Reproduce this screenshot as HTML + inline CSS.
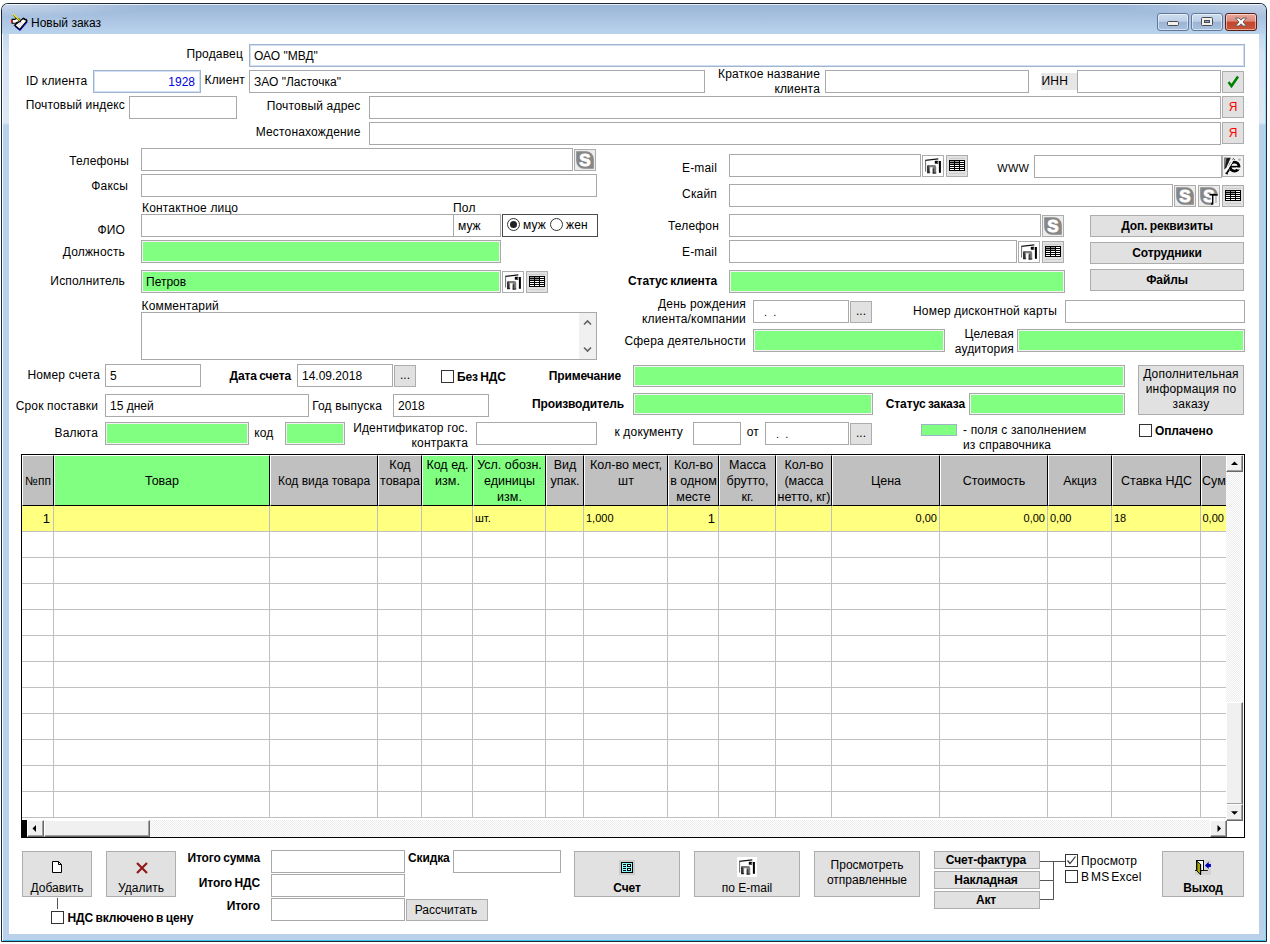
<!DOCTYPE html>
<html lang="ru"><head><meta charset="utf-8"><title>Новый заказ</title>
<style>
html,body{margin:0;padding:0;background:#fff;}
body{width:1270px;height:944px;position:relative;overflow:hidden;font-family:"Liberation Sans",sans-serif;font-size:12px;color:#000;}
div{box-sizing:border-box;}
#win{position:absolute;left:1px;top:3px;width:1266px;height:939px;border-radius:7px 7px 1px 1px;background:#1c2833;}
#frame{position:absolute;left:1px;top:1px;right:1px;bottom:1px;border-radius:6px 6px 0 0;
 background:linear-gradient(to bottom,#cfdff0 0px,#a6bfdf 9px,#b4cbe7 22px,#c3d8ee 31px,#d6e3f3 50px,#dde8f5 119px,#b9d1ea 121px,#b9d1ea 100%);
 box-shadow:inset 1px 0 0 rgba(255,255,255,.9),inset -1px 0 0 rgba(120,215,245,.7),inset 0 -1px 0 #3cc6ef;}
#tbar{position:absolute;left:1px;top:1px;right:1px;height:30px;border-radius:6px 6px 0 0;
 background:radial-gradient(ellipse 150px 13px at 0 0,rgba(255,255,255,.5),rgba(255,255,255,0)),radial-gradient(ellipse 150px 13px at 100% 0,rgba(255,255,255,.45),rgba(255,255,255,0)),linear-gradient(to bottom,#e6eef8 0px,#e6eef8 1px,#9ab5d7 1px,#a3bddd 9px,#b9d2ec 29px,#bbd3ed 30px);}
#client{position:absolute;left:9px;top:34px;width:1250px;height:900px;background:#fff;}
#title{position:absolute;left:31px;top:15px;font-size:12px;line-height:16px;white-space:nowrap;color:#000;}
.l{position:absolute;white-space:nowrap;letter-spacing:0.17px;}
.b{font-weight:bold;letter-spacing:-0.12px;word-spacing:-0.8px;}
.i{position:absolute;background:#fff;border:1px solid #a9a9a9;font-size:12px;line-height:20px;padding:0.6px 0 0 4px;white-space:nowrap;overflow:hidden;}
.g{background:#80ff80;box-shadow:inset 0 0 0 1px #f3f3f3;}
.hot{border-color:#a3b3cb;box-shadow:inset 0 0 0 1px #cfe0f4;}
.bt{position:absolute;background:#e1e1e1;border:1px solid #adadad;text-align:center;font-size:12px;line-height:14px;white-space:nowrap;overflow:hidden;}
.bt svg{position:absolute;}
.cb{position:absolute;width:13px;height:13px;background:#fff;border:1px solid #333;}
.gh{position:absolute;background:#c0c0c0;border-right:1px solid #000;border-bottom:1px solid #000;border-left:1px solid #fff;border-top:1px solid #fff;font-size:12.5px;line-height:16px;text-align:center;display:flex;align-items:center;justify-content:center;top:455px;height:51px;overflow:hidden;white-space:nowrap;}
.gh.gr{background:#80ff80;}
.gc{position:absolute;font-size:11px;line-height:14px;white-space:nowrap;}
.ib{background:#ececec;}
.ibw{background:#fff;}

</style></head>
<body>
<div id="win"><div id="frame"></div><div id="tbar"></div></div>
<div id="client"></div>
<svg style="position:absolute;left:10px;top:13px" width="18" height="18" viewBox="10 13 18 18">
<path d="M15.1 26.2 L20 30.2 L27.3 21.6" fill="none" stroke="#0000f0" stroke-width="1.2"/>
<path d="M14.6 25.2 L23.4 18.3 L26.9 20.8 L19.8 29.4 Z" fill="#fff" stroke="#000" stroke-width="1.3" stroke-linejoin="miter"/>
<path d="M17.5 25.5 L21.5 22.4 M19 27 L22.8 23.6" stroke="#c8c8c8" stroke-width=".8"/>
<path d="M23.2 18.2 L25.2 19.8 M25.6 19 L26.6 20" stroke="#000" stroke-width="1.4"/>
<path d="M12.1 19.4 L14.8 19.4 L16.6 18.2 L19.4 19.2 L20.3 21.6 L17 22.2 L15.6 23.2 L12.1 23.2 Z" fill="#fff" stroke="#000" stroke-width="1.1"/>
<rect x="11" y="19.9" width="1.3" height="3.1" fill="#f00"/>
<path d="M13.3 14.9 L19.7 21.1" stroke="#000" stroke-width="1.3"/>
<path d="M13.1 14.2 L19.9 20.6" stroke="#f4f400" stroke-width="1.3"/>
</svg>
<div id="title">Новый заказ</div>
<div style="position:absolute;left:1157px;top:13px;width:32px;height:18px;border:1px solid #62799a;border-radius:3px;background:linear-gradient(to bottom,#cfdef0 0%,#bccfe7 46%,#9bb4d4 50%,#a9c1df 100%);box-shadow:inset 0 0 0 1px rgba(255,255,255,.5);"><div style="position:absolute;left:9px;top:7px;width:12px;height:5px;background:#f4f1ea;border:1px solid #4a4a55;border-radius:1.5px"></div></div>
<div style="position:absolute;left:1191px;top:13px;width:32px;height:18px;border:1px solid #62799a;border-radius:3px;background:linear-gradient(to bottom,#cfdef0 0%,#bccfe7 46%,#9bb4d4 50%,#a9c1df 100%);box-shadow:inset 0 0 0 1px rgba(255,255,255,.5);"><div style="position:absolute;left:9px;top:3px;width:12px;height:9px;background:#f4f1ea;border:1px solid #4a4a55;border-radius:1.5px"><div style="position:absolute;left:2px;top:2px;width:6px;height:3px;background:#8aa5c8;border:1px solid #4a4a55"></div></div></div>
<div style="position:absolute;left:1225px;top:13px;width:32px;height:18px;border:1px solid #5d1e14;border-radius:3px;background:linear-gradient(to bottom,#e9a99b 0%,#d98a7b 45%,#c4452c 50%,#c9553a 100%);box-shadow:inset 0 0 0 1px rgba(255,255,255,.5);"><svg width="30" height="16" viewBox="0 0 30 16" style="position:absolute;left:0;top:0"><path d="M9.5 4 L13 4 L15 6.2 L17 4 L20.5 4 L17 8 L20.5 12 L17 12 L15 9.8 L13 12 L9.5 12 L13 8 Z" fill="#fff" stroke="#555" stroke-width=".9"/></svg></div>
<div class="l" style="top:47.0px;line-height:14px;font-size:12px;right:1027.0px;text-align:right;">Продавец</div>
<div class="i hot" style="left:249px;top:44px;width:996px;height:23px;">ОАО "МВД"</div>
<div class="l" style="top:74.0px;line-height:14px;font-size:12px;left:26.0px;">ID клиента</div>
<div class="i hot" style="left:93px;top:70px;width:108px;height:23px;text-align:right;padding-right:5px;color:#0000e0;">1928</div>
<div class="l" style="top:73.0px;line-height:14px;font-size:12px;right:1025.0px;text-align:right;">Клиент</div>
<div class="i " style="left:249px;top:70px;width:456px;height:23px;">ЗАО "Ласточка"</div>
<div class="l" style="top:67.0px;line-height:14px;font-size:12px;right:450.0px;text-align:right;">Краткое название</div>
<div class="l" style="top:82.0px;line-height:14px;font-size:12px;right:450.0px;text-align:right;">клиента</div>
<div class="i " style="left:825px;top:70px;width:204px;height:23px;"></div>
<div style="position:absolute;left:1041px;top:73px;width:36px;height:17px;background:#e6e6e6;"></div>
<div class="l" style="top:74.0px;line-height:14px;font-size:12px;left:1041.5px;">ИНН</div>
<div class="i " style="left:1077px;top:70px;width:144px;height:23px;"></div>
<div class="bt " style="left:1222px;top:71px;width:22px;height:22px;"><svg width="20" height="20" viewBox="0 0 20 20" style="left:0;top:0"><path d="M5.5 10 L8.5 14 L15 4.5" fill="none" stroke="#008000" stroke-width="2.5"/></svg></div>
<div class="l" style="top:98.0px;line-height:14px;font-size:12px;right:1145.0px;text-align:right;">Почтовый индекс</div>
<div class="i " style="left:129px;top:96px;width:108px;height:23px;"></div>
<div class="l" style="top:99.0px;line-height:14px;font-size:12px;right:909.5px;text-align:right;">Почтовый адрес</div>
<div class="i " style="left:369px;top:96px;width:852px;height:23px;"></div>
<div class="bt " style="left:1222px;top:96px;width:22px;height:22px;"><span style="color:#f00;line-height:20px">Я</span></div>
<div class="l" style="top:125.0px;line-height:14px;font-size:12px;right:909.5px;text-align:right;">Местонахождение</div>
<div class="i " style="left:369px;top:122px;width:852px;height:23px;"></div>
<div class="bt " style="left:1222px;top:122px;width:22px;height:22px;"><span style="color:#f00;line-height:20px">Я</span></div>
<div class="l" style="top:153.5px;line-height:14px;font-size:12px;right:1141.0px;text-align:right;">Телефоны</div>
<div class="i " style="left:141px;top:148px;width:432px;height:23px;"></div>
<div class="bt ib" style="left:574px;top:149px;width:22px;height:22px;"><svg width="20" height="20" viewBox="0 0 20 20" style="left:0;top:0"><path d="M1.2 1.2 L11 1.2 A7.8 7.8 0 0 1 18.8 9 L18.8 18.8 L9 18.8 A7.8 7.8 0 0 1 1.2 11 Z" fill="#878787"/><text x="10" y="16.2" text-anchor="middle" font-family="Liberation Sans, sans-serif" font-weight="bold" font-size="17" fill="#fff" stroke="#fff" stroke-width=".9">S</text></svg></div>
<div class="l" style="top:179.0px;line-height:14px;font-size:12px;right:1142.0px;text-align:right;">Факсы</div>
<div class="i " style="left:141px;top:174px;width:456px;height:23px;"></div>
<div class="l" style="top:201.0px;line-height:14px;font-size:12px;left:142.0px;">Контактное лицо</div>
<div class="l" style="top:201.0px;line-height:14px;font-size:12px;left:453.0px;">Пол</div>
<div class="l" style="top:222.5px;line-height:14px;font-size:12px;right:1145.0px;text-align:right;">ФИО</div>
<div class="i " style="left:141px;top:214px;width:313px;height:23px;"></div>
<div class="i " style="left:453px;top:214px;width:48px;height:23px;">муж</div>
<div style="position:absolute;left:502px;top:214px;width:96px;height:23px;border:1px solid #4a4a4a;background:#fff;"></div>
<div style="position:absolute;left:507.0px;top:218.0px;width:13px;height:13px;border-radius:50%;border:1px solid #333;background:#fff"><div style="position:absolute;left:2px;top:2px;width:7px;height:7px;border-radius:50%;background:#222"></div></div>
<div class="l" style="top:217.5px;line-height:14px;font-size:12px;left:523.0px;">муж</div>
<div style="position:absolute;left:550.0px;top:218.0px;width:13px;height:13px;border-radius:50%;border:1px solid #333;background:#fff"></div>
<div class="l" style="top:217.5px;line-height:14px;font-size:12px;left:566.0px;">жен</div>
<div class="l" style="top:245.0px;line-height:14px;font-size:12px;right:1145.0px;text-align:right;">Должность</div>
<div class="i g" style="left:141px;top:240px;width:360px;height:23px;"></div>
<div class="l" style="top:274.0px;line-height:14px;font-size:12px;right:1145.0px;text-align:right;">Исполнитель</div>
<div class="i g" style="left:141px;top:270px;width:360px;height:23px;">Петров</div>
<div class="bt ibw" style="left:502px;top:271px;width:22px;height:22px;"><svg width="20" height="20" viewBox="0 0 20 20" style="left:0px;top:0px"><rect x="0" y="0" width="20" height="20" fill="#fff"/><path d="M2.2 3.8 L15.3 2.2 L15.3 3.4 L2.2 5 Z" fill="#111"/><path d="M2.6 4.6 L2.6 15.6" stroke="#6a6a6a" stroke-width="1"/><rect x="11.8" y="4.8" width="3.5" height="2.9" fill="#000"/><rect x="14.3" y="5.7" width="1" height="1" fill="#c8c8c8"/><rect x="15.9" y="5" width="2" height="11.8" fill="#000"/><path d="M4.1 17 L4.1 10.6 Q4.1 9.1 5.8 9.1 L11.4 9.1 Q13.2 9.1 13.2 10.8 L13.2 17.6 L9.7 17.6 L9.7 11.3 L7.1 11.3 L7.1 17 Z" fill="#7c7c7c"/><path d="M4.1 17 L4.1 10.6 Q4.1 9.3 5.4 9.1 L6.3 17 Z" fill="#2c2c2c"/><path d="M9.7 17.6 L9.7 12.4 L11.3 12.4 L11.3 17.6 Z" fill="#3a3a3a"/><path d="M4.1 16.2 L7.1 16.2 L7.1 17.2 L4.1 17.2 Z M9.7 16.6 L13.2 16.6 L13.2 17.6 L9.7 17.6 Z" fill="#2a2a2a"/></svg></div>
<div class="bt " style="left:526px;top:271px;width:22px;height:22px;"><svg width="18" height="16" viewBox="0 0 18 16" shape-rendering="crispEdges" style="left:1px;top:2px"><rect x="1" y="0" width="16" height="1" fill="#cdcdcd"/><rect x="1" y="15" width="16" height="1" fill="#cdcdcd"/><rect x="1" y="2" width="16" height="11" fill="#000"/><rect x="2" y="3" width="4" height="1" fill="#9a9a9a"/><rect x="7" y="3" width="4" height="1" fill="#9a9a9a"/><rect x="12" y="3" width="4" height="1" fill="#fff"/><rect x="2" y="5" width="4" height="1" fill="#9a9a9a"/><rect x="7" y="5" width="4" height="1" fill="#9a9a9a"/><rect x="12" y="5" width="4" height="1" fill="#fff"/><rect x="2" y="7" width="4" height="1" fill="#fff"/><rect x="7" y="7" width="4" height="1" fill="#fff"/><rect x="12" y="7" width="4" height="1" fill="#fff"/><rect x="2" y="9" width="4" height="1" fill="#fff"/><rect x="7" y="9" width="4" height="1" fill="#fff"/><rect x="12" y="9" width="4" height="1" fill="#fff"/><rect x="2" y="11" width="4" height="1" fill="#fff"/><rect x="7" y="11" width="4" height="1" fill="#fff"/><rect x="12" y="11" width="4" height="1" fill="#fff"/></svg></div>
<div class="l" style="top:299.0px;line-height:14px;font-size:12px;left:141.5px;">Комментарий</div>
<div class="i " style="left:141px;top:312px;width:456px;height:48px;"></div>
<div style="position:absolute;left:579px;top:313px;width:17px;height:46px;background:#f0f0f0;"></div>
<svg style="position:absolute;left:579px;top:314px" width="17" height="44" viewBox="0 0 17 44"><path d="M5 10.5 L8.5 7 L12 10.5" fill="none" stroke="#606060" stroke-width="1.6"/><path d="M5 33.5 L8.5 37 L12 33.5" fill="none" stroke="#606060" stroke-width="1.6"/></svg>
<div class="l" style="top:161.0px;line-height:14px;font-size:12px;right:553.0px;text-align:right;">E-mail</div>
<div class="i " style="left:729px;top:154px;width:192px;height:23px;"></div>
<div class="bt ibw" style="left:922px;top:155px;width:22px;height:22px;"><svg width="20" height="20" viewBox="0 0 20 20" style="left:0px;top:0px"><rect x="0" y="0" width="20" height="20" fill="#fff"/><path d="M2.2 3.8 L15.3 2.2 L15.3 3.4 L2.2 5 Z" fill="#111"/><path d="M2.6 4.6 L2.6 15.6" stroke="#6a6a6a" stroke-width="1"/><rect x="11.8" y="4.8" width="3.5" height="2.9" fill="#000"/><rect x="14.3" y="5.7" width="1" height="1" fill="#c8c8c8"/><rect x="15.9" y="5" width="2" height="11.8" fill="#000"/><path d="M4.1 17 L4.1 10.6 Q4.1 9.1 5.8 9.1 L11.4 9.1 Q13.2 9.1 13.2 10.8 L13.2 17.6 L9.7 17.6 L9.7 11.3 L7.1 11.3 L7.1 17 Z" fill="#7c7c7c"/><path d="M4.1 17 L4.1 10.6 Q4.1 9.3 5.4 9.1 L6.3 17 Z" fill="#2c2c2c"/><path d="M9.7 17.6 L9.7 12.4 L11.3 12.4 L11.3 17.6 Z" fill="#3a3a3a"/><path d="M4.1 16.2 L7.1 16.2 L7.1 17.2 L4.1 17.2 Z M9.7 16.6 L13.2 16.6 L13.2 17.6 L9.7 17.6 Z" fill="#2a2a2a"/></svg></div>
<div class="bt " style="left:946px;top:155px;width:22px;height:22px;"><svg width="18" height="16" viewBox="0 0 18 16" shape-rendering="crispEdges" style="left:1px;top:2px"><rect x="1" y="0" width="16" height="1" fill="#cdcdcd"/><rect x="1" y="15" width="16" height="1" fill="#cdcdcd"/><rect x="1" y="2" width="16" height="11" fill="#000"/><rect x="2" y="3" width="4" height="1" fill="#9a9a9a"/><rect x="7" y="3" width="4" height="1" fill="#9a9a9a"/><rect x="12" y="3" width="4" height="1" fill="#fff"/><rect x="2" y="5" width="4" height="1" fill="#9a9a9a"/><rect x="7" y="5" width="4" height="1" fill="#9a9a9a"/><rect x="12" y="5" width="4" height="1" fill="#fff"/><rect x="2" y="7" width="4" height="1" fill="#fff"/><rect x="7" y="7" width="4" height="1" fill="#fff"/><rect x="12" y="7" width="4" height="1" fill="#fff"/><rect x="2" y="9" width="4" height="1" fill="#fff"/><rect x="7" y="9" width="4" height="1" fill="#fff"/><rect x="12" y="9" width="4" height="1" fill="#fff"/><rect x="2" y="11" width="4" height="1" fill="#fff"/><rect x="7" y="11" width="4" height="1" fill="#fff"/><rect x="12" y="11" width="4" height="1" fill="#fff"/></svg></div>
<div class="l" style="top:161.0px;line-height:14px;font-size:11px;right:241.0px;text-align:right;">WWW</div>
<div class="i " style="left:1034px;top:155px;width:188px;height:23px;"></div>
<div class="bt " style="left:1222px;top:155px;width:22px;height:22px;"><svg width="20" height="20" viewBox="0 0 20 20" style="left:0;top:0"><rect x="0" y="0" width="20" height="20" fill="#f1f1f1"/><path d="M1.2 1.8 L7.8 1.8 L3.4 11.5 L1.2 13.5 Z" fill="#1c1c1c"/><path d="M1.2 1.8 L3.6 1.8 L2 11 L1.2 13.5 Z" fill="#8a8a8a"/><circle cx="11.5" cy="10.6" r="4.5" fill="#fff" stroke="#000" stroke-width="2.9"/><rect x="7.4" y="9.8" width="9.6" height="1.7" fill="#000"/><path d="M12.6 11.5 L17.8 11.5 L17.8 13.4 L14.4 13.4 Z" fill="#f1f1f1"/><path d="M9.5 3.4 Q10.6 1.6 11.6 3.8" fill="none" stroke="#222" stroke-width="1"/><path d="M2.6 18 Q2 15.4 5.4 12.6 L6.8 14.4 Q4.4 16.6 5 18.4 Z" fill="#000"/><path d="M2.4 16.4 L9.4 5" stroke="#fff" stroke-width="1.5"/><path d="M15 3.2 L17.6 3.2 M15.6 4.2 L17.4 4.2" stroke="#9a9a9a" stroke-width=".9"/></svg></div>
<div class="l" style="top:187.0px;line-height:14px;font-size:12px;right:553.0px;text-align:right;">Скайп</div>
<div class="i " style="left:729px;top:184px;width:444px;height:23px;"></div>
<div class="bt ib" style="left:1174px;top:185px;width:22px;height:22px;"><svg width="20" height="20" viewBox="0 0 20 20" style="left:0;top:0"><path d="M1.2 1.2 L11 1.2 A7.8 7.8 0 0 1 18.8 9 L18.8 18.8 L9 18.8 A7.8 7.8 0 0 1 1.2 11 Z" fill="#878787"/><text x="10" y="16.2" text-anchor="middle" font-family="Liberation Sans, sans-serif" font-weight="bold" font-size="17" fill="#fff" stroke="#fff" stroke-width=".9">S</text></svg></div>
<div class="bt ib" style="left:1198px;top:185px;width:22px;height:22px;"><svg width="20" height="20" viewBox="0 0 20 20" style="left:0;top:0"><path d="M1.2 1.2 L11 1.2 A7.8 7.8 0 0 1 18.8 9 L18.8 18.8 L9 18.8 A7.8 7.8 0 0 1 1.2 11 Z" fill="#878787"/><text x="10" y="16.2" text-anchor="middle" font-family="Liberation Sans, sans-serif" font-weight="bold" font-size="17" fill="#fff" stroke="#fff" stroke-width=".9">S</text><rect x="13" y="10" width="7" height="10" fill="#f4f4f4"/><path d="M10.5 8.7 L18.5 8.7 M13.7 8.7 L13.7 18 M12 18 L14.2 18" stroke="#000" stroke-width="1.4" fill="none"/><path d="M17 10 L17 17" stroke="#999" stroke-width="1"/></svg></div>
<div class="bt " style="left:1222px;top:185px;width:22px;height:22px;"><svg width="18" height="16" viewBox="0 0 18 16" shape-rendering="crispEdges" style="left:1px;top:2px"><rect x="1" y="0" width="16" height="1" fill="#cdcdcd"/><rect x="1" y="15" width="16" height="1" fill="#cdcdcd"/><rect x="1" y="2" width="16" height="11" fill="#000"/><rect x="2" y="3" width="4" height="1" fill="#9a9a9a"/><rect x="7" y="3" width="4" height="1" fill="#9a9a9a"/><rect x="12" y="3" width="4" height="1" fill="#fff"/><rect x="2" y="5" width="4" height="1" fill="#9a9a9a"/><rect x="7" y="5" width="4" height="1" fill="#9a9a9a"/><rect x="12" y="5" width="4" height="1" fill="#fff"/><rect x="2" y="7" width="4" height="1" fill="#fff"/><rect x="7" y="7" width="4" height="1" fill="#fff"/><rect x="12" y="7" width="4" height="1" fill="#fff"/><rect x="2" y="9" width="4" height="1" fill="#fff"/><rect x="7" y="9" width="4" height="1" fill="#fff"/><rect x="12" y="9" width="4" height="1" fill="#fff"/><rect x="2" y="11" width="4" height="1" fill="#fff"/><rect x="7" y="11" width="4" height="1" fill="#fff"/><rect x="12" y="11" width="4" height="1" fill="#fff"/></svg></div>
<div class="l" style="top:219.0px;line-height:14px;font-size:12px;right:551.0px;text-align:right;">Телефон</div>
<div class="i " style="left:729px;top:214px;width:312px;height:23px;"></div>
<div class="bt ib" style="left:1042px;top:215px;width:22px;height:22px;"><svg width="20" height="20" viewBox="0 0 20 20" style="left:0;top:0"><path d="M1.2 1.2 L11 1.2 A7.8 7.8 0 0 1 18.8 9 L18.8 18.8 L9 18.8 A7.8 7.8 0 0 1 1.2 11 Z" fill="#878787"/><text x="10" y="16.2" text-anchor="middle" font-family="Liberation Sans, sans-serif" font-weight="bold" font-size="17" fill="#fff" stroke="#fff" stroke-width=".9">S</text></svg></div>
<div class="l" style="top:245.0px;line-height:14px;font-size:12px;right:553.0px;text-align:right;">E-mail</div>
<div class="i " style="left:729px;top:240px;width:288px;height:23px;"></div>
<div class="bt ibw" style="left:1018px;top:241px;width:22px;height:22px;"><svg width="20" height="20" viewBox="0 0 20 20" style="left:0px;top:0px"><rect x="0" y="0" width="20" height="20" fill="#fff"/><path d="M2.2 3.8 L15.3 2.2 L15.3 3.4 L2.2 5 Z" fill="#111"/><path d="M2.6 4.6 L2.6 15.6" stroke="#6a6a6a" stroke-width="1"/><rect x="11.8" y="4.8" width="3.5" height="2.9" fill="#000"/><rect x="14.3" y="5.7" width="1" height="1" fill="#c8c8c8"/><rect x="15.9" y="5" width="2" height="11.8" fill="#000"/><path d="M4.1 17 L4.1 10.6 Q4.1 9.1 5.8 9.1 L11.4 9.1 Q13.2 9.1 13.2 10.8 L13.2 17.6 L9.7 17.6 L9.7 11.3 L7.1 11.3 L7.1 17 Z" fill="#7c7c7c"/><path d="M4.1 17 L4.1 10.6 Q4.1 9.3 5.4 9.1 L6.3 17 Z" fill="#2c2c2c"/><path d="M9.7 17.6 L9.7 12.4 L11.3 12.4 L11.3 17.6 Z" fill="#3a3a3a"/><path d="M4.1 16.2 L7.1 16.2 L7.1 17.2 L4.1 17.2 Z M9.7 16.6 L13.2 16.6 L13.2 17.6 L9.7 17.6 Z" fill="#2a2a2a"/></svg></div>
<div class="bt " style="left:1042px;top:241px;width:22px;height:22px;"><svg width="18" height="16" viewBox="0 0 18 16" shape-rendering="crispEdges" style="left:1px;top:2px"><rect x="1" y="0" width="16" height="1" fill="#cdcdcd"/><rect x="1" y="15" width="16" height="1" fill="#cdcdcd"/><rect x="1" y="2" width="16" height="11" fill="#000"/><rect x="2" y="3" width="4" height="1" fill="#9a9a9a"/><rect x="7" y="3" width="4" height="1" fill="#9a9a9a"/><rect x="12" y="3" width="4" height="1" fill="#fff"/><rect x="2" y="5" width="4" height="1" fill="#9a9a9a"/><rect x="7" y="5" width="4" height="1" fill="#9a9a9a"/><rect x="12" y="5" width="4" height="1" fill="#fff"/><rect x="2" y="7" width="4" height="1" fill="#fff"/><rect x="7" y="7" width="4" height="1" fill="#fff"/><rect x="12" y="7" width="4" height="1" fill="#fff"/><rect x="2" y="9" width="4" height="1" fill="#fff"/><rect x="7" y="9" width="4" height="1" fill="#fff"/><rect x="12" y="9" width="4" height="1" fill="#fff"/><rect x="2" y="11" width="4" height="1" fill="#fff"/><rect x="7" y="11" width="4" height="1" fill="#fff"/><rect x="12" y="11" width="4" height="1" fill="#fff"/></svg></div>
<div class="l b" style="top:274.0px;line-height:14px;font-size:12px;right:553.0px;text-align:right;">Статус клиента</div>
<div class="i g" style="left:729px;top:270px;width:336px;height:23px;"></div>
<div class="l" style="top:297.0px;line-height:14px;font-size:12px;right:524.0px;text-align:right;">День рождения</div>
<div class="l" style="top:312.0px;line-height:14px;font-size:12px;right:524.0px;text-align:right;">клиента/компании</div>
<div class="i " style="left:753px;top:300px;width:96px;height:23px;font-size:11px;">&nbsp; .&nbsp; .</div>
<div class="bt " style="left:850px;top:301px;width:22px;height:22px;"><span style="line-height:18px">...</span></div>
<div class="l" style="top:304.0px;line-height:14px;font-size:12px;right:213.0px;text-align:right;">Номер дисконтной карты</div>
<div class="i " style="left:1065px;top:300px;width:180px;height:23px;"></div>
<div class="l" style="top:334.0px;line-height:14px;font-size:12px;right:524.0px;text-align:right;">Сфера деятельности</div>
<div class="i g" style="left:753px;top:329px;width:192px;height:23px;"></div>
<div class="l" style="top:327.0px;line-height:14px;font-size:12px;right:256.0px;text-align:right;">Целевая</div>
<div class="l" style="top:342.0px;line-height:14px;font-size:12px;right:256.0px;text-align:right;">аудитория</div>
<div class="i g" style="left:1017px;top:329px;width:228px;height:23px;"></div>
<div class="bt " style="left:1090px;top:215px;width:154px;height:22px;"><span class="b" style="line-height:21px">Доп. реквизиты</span></div>
<div class="bt " style="left:1090px;top:242px;width:154px;height:22px;"><span class="b" style="line-height:21px">Сотрудники</span></div>
<div class="bt " style="left:1090px;top:269px;width:154px;height:22px;"><span class="b" style="line-height:21px">Файлы</span></div>
<div class="l" style="top:368.0px;line-height:14px;font-size:12px;right:1170.0px;text-align:right;">Номер счета</div>
<div class="i " style="left:105px;top:364px;width:96px;height:23px;">5</div>
<div class="l b" style="top:369.0px;line-height:14px;font-size:12px;right:979.0px;text-align:right;">Дата счета</div>
<div class="i " style="left:297px;top:364px;width:96px;height:23px;">14.09.2018</div>
<div class="bt " style="left:394px;top:365px;width:22px;height:22px;"><span style="line-height:18px">...</span></div>
<div class="cb" style="left:441px;top:370px"></div>
<div class="l b" style="top:369.5px;line-height:14px;font-size:12px;left:457.0px;">Без НДС</div>
<div class="l b" style="top:369.0px;line-height:14px;font-size:12px;right:649.0px;text-align:right;">Примечание</div>
<div class="i g" style="left:633px;top:365px;width:492px;height:22px;"></div>
<div class="bt " style="left:1138px;top:365px;width:106px;height:50px;"><div style="line-height:15px;padding-top:1px;letter-spacing:0.2px">Дополнительная<br>информация по<br>заказу</div></div>
<div class="l" style="top:399.0px;line-height:14px;font-size:12px;right:1172.0px;text-align:right;">Срок поставки</div>
<div class="i " style="left:105px;top:394px;width:204px;height:23px;">15 дней</div>
<div class="l" style="top:399.0px;line-height:14px;font-size:12px;right:888.0px;text-align:right;">Год выпуска</div>
<div class="i " style="left:393px;top:394px;width:96px;height:23px;">2018</div>
<div class="l b" style="top:397.0px;line-height:14px;font-size:12px;right:646.0px;text-align:right;">Производитель</div>
<div class="i g" style="left:633px;top:393px;width:240px;height:22px;"></div>
<div class="l b" style="top:397.0px;line-height:14px;font-size:12px;right:305.0px;text-align:right;">Статус заказа</div>
<div class="i g" style="left:969px;top:393px;width:156px;height:22px;"></div>
<div class="l" style="top:425.5px;line-height:14px;font-size:12px;right:1172.0px;text-align:right;">Валюта</div>
<div class="i g" style="left:105px;top:422px;width:144px;height:23px;"></div>
<div class="l" style="top:425.5px;line-height:14px;font-size:12px;right:996.5px;text-align:right;">код</div>
<div class="i g" style="left:285px;top:422px;width:60px;height:23px;"></div>
<div class="l" style="top:421.0px;line-height:14px;font-size:12px;right:802.0px;text-align:right;">Идентификатор гос.</div>
<div class="l" style="top:435.5px;line-height:14px;font-size:12px;right:802.0px;text-align:right;">контракта</div>
<div class="i " style="left:476px;top:422px;width:121px;height:23px;"></div>
<div class="l" style="top:425.0px;line-height:14px;font-size:12px;right:587.0px;text-align:right;">к документу</div>
<div class="i " style="left:693px;top:422px;width:48px;height:23px;"></div>
<div class="l" style="top:425.0px;line-height:14px;font-size:12px;right:511.0px;text-align:right;">от</div>
<div class="i " style="left:765px;top:422px;width:84px;height:23px;font-size:11px;">&nbsp; .&nbsp; .</div>
<div class="bt " style="left:850px;top:423px;width:22px;height:22px;"><span style="line-height:18px">...</span></div>
<div style="position:absolute;left:921px;top:424px;width:36px;height:12px;background:#80ff80;border:1px solid #9fb3c8;"></div>
<div class="l" style="top:423.0px;line-height:14px;font-size:12px;left:963.0px;">- поля с заполнением</div>
<div class="l" style="top:438.0px;line-height:14px;font-size:12px;left:963.0px;">из справочника</div>
<div class="cb" style="left:1139px;top:424px"></div>
<div class="l b" style="top:424.0px;line-height:14px;font-size:12px;left:1155.0px;">Оплачено</div>
<div style="position:absolute;left:21px;top:454px;width:1224px;height:384px;background:#fff;border:1px solid #000;"></div>
<div class="gh" style="left:22px;width:32px;font-size:12px;"><div>№пп</div></div>
<div class="gh gr" style="left:54px;width:216px;"><div>Товар</div></div>
<div class="gh" style="left:270px;width:108px;font-size:12px;"><div>Код вида товара</div></div>
<div class="gh" style="left:378px;width:44px;align-items:flex-start;padding-top:0.8px;"><div>Код<br>товара</div></div>
<div class="gh gr" style="left:422px;width:51px;align-items:flex-start;padding-top:0.8px;"><div>Код ед.<br>изм.</div></div>
<div class="gh gr" style="left:473px;width:73px;align-items:flex-start;padding-top:0.8px;"><div>Усл. обозн.<br>единицы<br>изм.</div></div>
<div class="gh" style="left:546px;width:38px;align-items:flex-start;padding-top:0.8px;"><div>Вид<br>упак.</div></div>
<div class="gh" style="left:584px;width:84px;align-items:flex-start;padding-top:0.8px;"><div>Кол-во мест,<br>шт</div></div>
<div class="gh" style="left:668px;width:51px;align-items:flex-start;padding-top:0.8px;"><div>Кол-во<br>в одном<br>месте</div></div>
<div class="gh" style="left:719px;width:57px;align-items:flex-start;padding-top:0.8px;"><div>Масса<br>брутто,<br>кг.</div></div>
<div class="gh" style="left:776px;width:56px;align-items:flex-start;padding-top:0.8px;"><div>Кол-во<br>(масса<br>нетто, кг)</div></div>
<div class="gh" style="left:832px;width:108px;"><div>Цена</div></div>
<div class="gh" style="left:940px;width:108px;"><div>Стоимость</div></div>
<div class="gh" style="left:1048px;width:64px;"><div>Акциз</div></div>
<div class="gh" style="left:1112px;width:89px;"><div>Ставка НДС</div></div>
<div class="gh" style="left:1201px;width:25px;border-right:none;justify-content:flex-start;padding-left:0px;"><div>Сум</div></div>
<div style="position:absolute;left:22px;top:506px;width:1204px;height:25px;background:#ffff80;"></div>
<div style="position:absolute;left:53px;top:506px;width:1px;height:312px;background:#c0c0c0;"></div>
<div style="position:absolute;left:269px;top:506px;width:1px;height:312px;background:#c0c0c0;"></div>
<div style="position:absolute;left:377px;top:506px;width:1px;height:312px;background:#c0c0c0;"></div>
<div style="position:absolute;left:421px;top:506px;width:1px;height:312px;background:#c0c0c0;"></div>
<div style="position:absolute;left:472px;top:506px;width:1px;height:312px;background:#c0c0c0;"></div>
<div style="position:absolute;left:545px;top:506px;width:1px;height:312px;background:#c0c0c0;"></div>
<div style="position:absolute;left:583px;top:506px;width:1px;height:312px;background:#c0c0c0;"></div>
<div style="position:absolute;left:667px;top:506px;width:1px;height:312px;background:#c0c0c0;"></div>
<div style="position:absolute;left:718px;top:506px;width:1px;height:312px;background:#c0c0c0;"></div>
<div style="position:absolute;left:775px;top:506px;width:1px;height:312px;background:#c0c0c0;"></div>
<div style="position:absolute;left:831px;top:506px;width:1px;height:312px;background:#c0c0c0;"></div>
<div style="position:absolute;left:939px;top:506px;width:1px;height:312px;background:#c0c0c0;"></div>
<div style="position:absolute;left:1047px;top:506px;width:1px;height:312px;background:#c0c0c0;"></div>
<div style="position:absolute;left:1111px;top:506px;width:1px;height:312px;background:#c0c0c0;"></div>
<div style="position:absolute;left:1200px;top:506px;width:1px;height:312px;background:#c0c0c0;"></div>
<div style="position:absolute;left:22px;top:531px;width:1204px;height:1px;background:#c0c0c0;"></div>
<div style="position:absolute;left:22px;top:557px;width:1204px;height:1px;background:#c0c0c0;"></div>
<div style="position:absolute;left:22px;top:583px;width:1204px;height:1px;background:#c0c0c0;"></div>
<div style="position:absolute;left:22px;top:609px;width:1204px;height:1px;background:#c0c0c0;"></div>
<div style="position:absolute;left:22px;top:635px;width:1204px;height:1px;background:#c0c0c0;"></div>
<div style="position:absolute;left:22px;top:661px;width:1204px;height:1px;background:#c0c0c0;"></div>
<div style="position:absolute;left:22px;top:687px;width:1204px;height:1px;background:#c0c0c0;"></div>
<div style="position:absolute;left:22px;top:713px;width:1204px;height:1px;background:#c0c0c0;"></div>
<div style="position:absolute;left:22px;top:739px;width:1204px;height:1px;background:#c0c0c0;"></div>
<div style="position:absolute;left:22px;top:765px;width:1204px;height:1px;background:#c0c0c0;"></div>
<div style="position:absolute;left:22px;top:791px;width:1204px;height:1px;background:#c0c0c0;"></div>
<div style="position:absolute;left:22px;top:817px;width:1204px;height:1px;background:#c0c0c0;"></div>
<div class="gc" style="top:511.5px;font-size:13px;right:1220px;text-align:right;">1</div>
<div class="gc" style="top:510.79999999999995px;font-size:11px;left:475px;">шт.</div>
<div class="gc" style="top:510.79999999999995px;font-size:11px;left:586px;">1,000</div>
<div class="gc" style="top:511.5px;font-size:13px;right:555px;text-align:right;">1</div>
<div class="gc" style="top:510.79999999999995px;font-size:11px;right:333px;text-align:right;">0,00</div>
<div class="gc" style="top:510.79999999999995px;font-size:11px;right:225px;text-align:right;">0,00</div>
<div class="gc" style="top:510.79999999999995px;font-size:11px;left:1050px;">0,00</div>
<div class="gc" style="top:510.79999999999995px;font-size:11px;left:1114px;">18</div>
<div class="gc" style="top:510.79999999999995px;font-size:11px;left:1202.5px;">0,00</div>
<div style="position:absolute;left:1226px;top:455px;width:17px;height:365px;background:#f7f7f7 conic-gradient(#fff 25%,#ececec 0 50%,#fff 0 75%,#ececec 0) 0 0/2px 2px;"></div>
<div style="position:absolute;left:22px;top:820px;width:1205px;height:17px;background:#f7f7f7 conic-gradient(#fff 25%,#ececec 0 50%,#fff 0 75%,#ececec 0) 0 0/2px 2px;"></div>
<div style="position:absolute;left:1226px;top:455px;width:17px;height:17px;background:#f0f0f0;border-top:1px solid #fff;border-left:1px solid #fff;border-right:1px solid #696969;border-bottom:1px solid #696969;box-shadow:inset -1px -1px 0 #a0a0a0;"></div>
<svg style="position:absolute;left:0;top:0;pointer-events:none" width="1270" height="944"><polygon points="1231.0,465.0 1238.0,465.0 1234.5,461.5" fill="#000"/></svg>
<div style="position:absolute;left:1226px;top:702px;width:17px;height:103px;background:#f0f0f0;border-top:1px solid #fff;border-left:1px solid #fff;border-right:1px solid #696969;border-bottom:1px solid #696969;box-shadow:inset -1px -1px 0 #a0a0a0;"></div>
<div style="position:absolute;left:1226px;top:804px;width:17px;height:17px;background:#f0f0f0;border-top:1px solid #fff;border-left:1px solid #fff;border-right:1px solid #696969;border-bottom:1px solid #696969;box-shadow:inset -1px -1px 0 #a0a0a0;"></div>
<svg style="position:absolute;left:0;top:0;pointer-events:none" width="1270" height="944"><polygon points="1231.0,811.2 1238.0,811.2 1234.5,814.7" fill="#000"/></svg>
<div style="position:absolute;left:22px;top:820px;width:5px;height:17px;background:#000;"></div>
<div style="position:absolute;left:27px;top:820px;width:17px;height:17px;background:#f0f0f0;border-top:1px solid #fff;border-left:1px solid #fff;border-right:1px solid #696969;border-bottom:1px solid #696969;box-shadow:inset -1px -1px 0 #a0a0a0;"></div>
<svg style="position:absolute;left:0;top:0;pointer-events:none" width="1270" height="944"><polygon points="36.0,825.0 36.0,832.0 32.5,828.5" fill="#000"/></svg>
<div style="position:absolute;left:44px;top:820px;width:106px;height:17px;background:#f0f0f0;border-top:1px solid #fff;border-left:1px solid #fff;border-right:1px solid #696969;border-bottom:1px solid #696969;box-shadow:inset -1px -1px 0 #a0a0a0;"></div>
<div style="position:absolute;left:1210px;top:820px;width:17px;height:17px;background:#f0f0f0;border-top:1px solid #fff;border-left:1px solid #fff;border-right:1px solid #696969;border-bottom:1px solid #696969;box-shadow:inset -1px -1px 0 #a0a0a0;"></div>
<svg style="position:absolute;left:0;top:0;pointer-events:none" width="1270" height="944"><polygon points="1217.5,825.0 1217.5,832.0 1221.0,828.5" fill="#000"/></svg>
<div class="bt " style="left:22px;top:851px;width:70px;height:46px;"><svg width="12" height="14" viewBox="0 0 12 14" style="left:28px;top:8px"><path d="M1.5 1.5 L7.5 1.5 L10.5 4.5 L10.5 12.5 L1.5 12.5 Z" fill="#fff" stroke="#000" stroke-width="1"/><path d="M7.5 1.5 L7.5 4.5 L10.5 4.5" fill="none" stroke="#000" stroke-width="1"/></svg><div style="position:absolute;left:0;right:0;top:29px">Добавить</div></div>
<div class="bt " style="left:106px;top:851px;width:70px;height:46px;"><svg width="14" height="14" viewBox="0 0 14 14" style="left:28px;top:8.5px"><path d="M2 2 L12 12 M12 2 L2 12" stroke="#901818" stroke-width="2.2"/></svg><div style="position:absolute;left:0;right:0;top:29px">Удалить</div></div>
<div style="position:absolute;left:57px;top:898px;width:1px;height:11px;background:#555;"></div>
<div class="cb" style="left:51px;top:911px"></div>
<div class="l b" style="top:911.0px;line-height:14px;font-size:12px;left:67.5px;">НДС включено в цену</div>
<div class="l b" style="top:851.0px;line-height:14px;font-size:12px;right:1010.0px;text-align:right;">Итого сумма</div>
<div class="i " style="left:271px;top:850px;width:134px;height:23px;"></div>
<div class="l b" style="top:876.0px;line-height:14px;font-size:12px;right:1010.0px;text-align:right;">Итого НДС</div>
<div class="i " style="left:271px;top:874px;width:134px;height:23px;"></div>
<div class="l b" style="top:899.0px;line-height:14px;font-size:12px;right:1010.0px;text-align:right;">Итого</div>
<div class="i " style="left:271px;top:898px;width:134px;height:23px;"></div>
<div class="l b" style="top:851.0px;line-height:14px;font-size:12px;left:408.0px;">Скидка</div>
<div class="i " style="left:453px;top:850px;width:108px;height:23px;"></div>
<div class="bt " style="left:406px;top:899px;width:82px;height:22px;"><span style="line-height:21px;padding-right:2px">Рассчитать</span></div>
<div class="bt " style="left:574px;top:851px;width:106px;height:46px;"><svg width="16" height="15" viewBox="0 0 16 15" shape-rendering="crispEdges" style="left:44px;top:8px"><rect x="0" y="0" width="16" height="15" fill="#cbcbcb"/><rect x="2" y="2" width="12" height="11" fill="#000"/><rect x="3" y="3" width="10" height="9" fill="#8ff"/><rect x="4" y="4" width="3" height="1" fill="#000"/><rect x="4" y="6" width="3" height="1" fill="#000"/><rect x="4" y="8" width="3" height="1" fill="#000"/><rect x="4" y="10" width="3" height="1" fill="#000"/><rect x="8" y="4" width="4" height="3" fill="#000"/><rect x="9" y="5" width="2" height="1" fill="#fff"/><rect x="8" y="8" width="4" height="3" fill="#000"/><rect x="9" y="9" width="2" height="1" fill="#fff"/></svg><div class="b" style="position:absolute;left:0;right:0;top:29px">Счет</div></div>
<div class="bt " style="left:694px;top:851px;width:106px;height:46px;"><svg width="20" height="20" viewBox="0 0 20 20" style="left:42px;top:5px"><rect x="0" y="0" width="20" height="20" fill="#fff"/><path d="M2.2 3.8 L15.3 2.2 L15.3 3.4 L2.2 5 Z" fill="#111"/><path d="M2.6 4.6 L2.6 15.6" stroke="#6a6a6a" stroke-width="1"/><rect x="11.8" y="4.8" width="3.5" height="2.9" fill="#000"/><rect x="14.3" y="5.7" width="1" height="1" fill="#c8c8c8"/><rect x="15.9" y="5" width="2" height="11.8" fill="#000"/><path d="M4.1 17 L4.1 10.6 Q4.1 9.1 5.8 9.1 L11.4 9.1 Q13.2 9.1 13.2 10.8 L13.2 17.6 L9.7 17.6 L9.7 11.3 L7.1 11.3 L7.1 17 Z" fill="#7c7c7c"/><path d="M4.1 17 L4.1 10.6 Q4.1 9.3 5.4 9.1 L6.3 17 Z" fill="#2c2c2c"/><path d="M9.7 17.6 L9.7 12.4 L11.3 12.4 L11.3 17.6 Z" fill="#3a3a3a"/><path d="M4.1 16.2 L7.1 16.2 L7.1 17.2 L4.1 17.2 Z M9.7 16.6 L13.2 16.6 L13.2 17.6 L9.7 17.6 Z" fill="#2a2a2a"/></svg><div style="position:absolute;left:0;right:0;top:29px">по E-mail</div></div>
<div class="bt " style="left:814px;top:851px;width:106px;height:46px;"><div style="line-height:15px;padding-top:6px">Просмотреть<br>отправленные</div></div>
<div class="bt " style="left:934px;top:851px;width:106px;height:18px;"><span class="b" style="line-height:17px;padding-right:2px">Счет-фактура</span></div>
<div class="bt " style="left:934px;top:871px;width:106px;height:18px;"><span class="b" style="line-height:17px;padding-right:2px">Накладная</span></div>
<div class="bt " style="left:934px;top:891px;width:106px;height:18px;"><span class="b" style="line-height:17px;padding-right:2px">Акт</span></div>
<div style="position:absolute;left:1040px;top:861px;width:25px;height:1px;background:#555;"></div>
<div style="position:absolute;left:1040px;top:880px;width:13px;height:1px;background:#555;"></div>
<div style="position:absolute;left:1040px;top:899px;width:13px;height:1px;background:#555;"></div>
<div style="position:absolute;left:1053px;top:861px;width:1px;height:39px;background:#555;"></div>
<div class="cb" style="left:1065px;top:854px"><svg width="11" height="11" viewBox="0 0 11 11" style="position:absolute;left:0;top:0"><path d="M1.5 5.5 L4 8.5 L9.5 1.5" fill="none" stroke="#333" stroke-width="1.2"/></svg></div>
<div class="l" style="top:854.0px;line-height:14px;font-size:12px;left:1081.0px;">Просмотр</div>
<div class="cb" style="left:1065px;top:870px"></div>
<div class="l" style="top:870.0px;line-height:14px;font-size:12px;left:1081.0px;word-spacing:-1.6px;">В MS Excel</div>
<div class="bt " style="left:1162px;top:851px;width:82px;height:46px;"><svg width="17" height="17" viewBox="1195 859 17 17" style="left:32px;top:7px"><rect x="1204.6" y="860.2" width="6.3" height="14.5" fill="#d2d2d2"/><rect x="1195" y="871.3" width="15.9" height="3.4" fill="#d2d2d2"/><rect x="1196.5" y="860.5" width="7" height="10" fill="#fff" stroke="#000" stroke-width="1"/><path d="M1195 870.5 L1207.8 870.5" stroke="#000" stroke-width="0.9"/><path d="M1196.9 861.2 L1200.6 864.3 L1200.6 874.8 L1196.9 870.9 Z" fill="#a4a400" stroke="#000" stroke-width=".9" stroke-linejoin="miter"/><path d="M1200.6 864 L1200.6 874.6" stroke="#000" stroke-width="1"/><path d="M1204.9 865.5 L1208.7 861.8 L1208.7 864 L1210.9 864 L1210.9 867.1 L1208.7 867.1 L1208.7 869.1 Z" fill="#0000b4"/></svg><div class="b" style="position:absolute;left:0;right:0;top:29px">Выход</div></div>
</body></html>
